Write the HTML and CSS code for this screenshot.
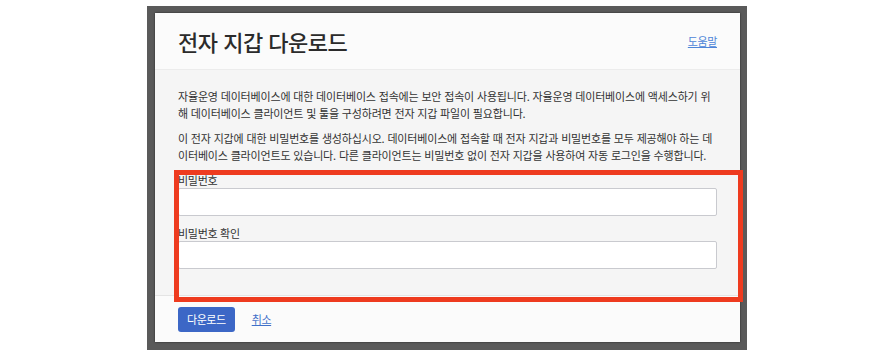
FILE: index.html
```html
<!DOCTYPE html>
<html lang="ko">
<head>
    <meta charset="UTF-8">
    <meta name="viewport" content="width=device-width, initial-scale=1.0">
    <title>전자 지갑 다운로드</title>
    <link rel="stylesheet" href="styles.css">
</head>
<body>
    <div class="backdrop">
        <div class="dialog">
            <div class="dialog-header">
                <h2>전자 지갑 다운로드</h2>
                <a href="#" class="help-link">도움말</a>
            </div>

            <div class="dialog-body">
                <p>자율운영 데이터베이스에 대한 데이터베이스 접속에는 보안 접속이 사용됩니다. 자율운영 데이터베이스에 액세스하기 위해 데이터베이스 클라이언트 및 툴을 구성하려면 전자 지갑 파일이 필요합니다.</p>
                <p>이 전자 지갑에 대한 비밀번호를 생성하십시오. 데이터베이스에 접속할 때 전자 지갑과 비밀번호를 모두 제공해야 하는 데이터베이스 클라이언트도 있습니다. 다른 클라이언트는 비밀번호 없이 전자 지갑을 사용하여 자동 로그인을 수행합니다.</p>

                <div class="field">
                    <label for="password">비밀번호</label>
                    <input type="password" id="password">
                </div>
                <div class="field">
                    <label for="confirm">비밀번호 확인</label>
                    <input type="password" id="confirm">
                </div>
            </div>

            <div class="dialog-footer">
                <button>다운로드</button>
                <a href="#" class="cancel-link">취소</a>
            </div>

            <div class="highlight"></div>
        </div>
    </div>
</body>
</html>
```

FILE: styles.css
```css
body {
    margin: 0;
    background-color: #ffffff;
    font-family: "Noto Sans CJK KR", "Noto Sans", sans-serif;
    color: #333333;
}

.backdrop {
    width: 585px;
    height: 329px;
    margin: 6px 0 0 147px;
    padding: 7px 7px 8px 8px;
    background-color: #5a5a5a;
}

.dialog {
    position: relative;
    height: 329px;
    background-color: #fbfbfb;
    box-shadow: 0 0 2px rgba(0, 0, 0, 0.6);
}

.dialog-header {
    display: flex;
    align-items: center;
    justify-content: space-between;
    height: 56px;
    padding: 0 23px;
    border-bottom: 1px solid #ececec;
}

.dialog-header h2 {
    margin: 0;
    font-size: 22px;
    font-weight: 500;
    letter-spacing: -0.5px;
    color: #2b2b2b;
}

.help-link {
    font-size: 11px;
    letter-spacing: -0.4px;
    color: #4f86d8;
}

.dialog-body {
    height: 207px;
    padding: 18px 23px 0;
    background-color: #f5f5f5;
    border-bottom: 1px solid #e4e4e4;
}

.dialog-body p {
    margin: 0 0 8px;
    font-size: 11px;
    line-height: 17px;
    letter-spacing: -0.17px;
}

.field label {
    display: block;
    font-size: 11px;
    line-height: 16px;
    letter-spacing: -0.3px;
}

.field input {
    display: block;
    box-sizing: border-box;
    width: 100%;
    height: 28px;
    margin: 0 0 9px;
    border: 1px solid #c9cacf;
    border-radius: 2px;
    background-color: #ffffff;
}

.dialog-footer {
    display: flex;
    align-items: center;
    gap: 17px;
    height: 46px;
    padding: 0 23px;
}

.dialog-footer button {
    height: 25px;
    padding: 0 9px;
    border: none;
    border-radius: 3px;
    background-color: #3c67c6;
    color: #ffffff;
    font-family: inherit;
    font-size: 11px;
    letter-spacing: -0.45px;
}

.cancel-link {
    font-size: 11px;
    letter-spacing: -0.4px;
    color: #3f70c9;
}

.highlight {
    position: absolute;
    left: 19px;
    top: 157px;
    width: 559px;
    height: 122px;
    border: 5px solid #ee3b1f;
}
```
